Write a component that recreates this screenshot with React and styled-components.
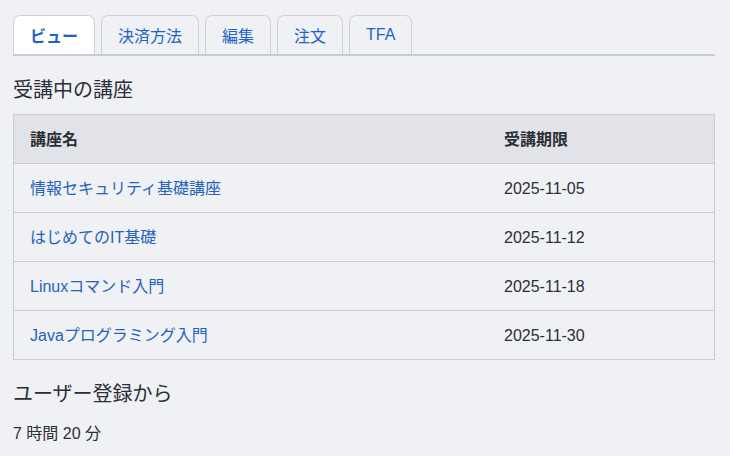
import styled, { createGlobalStyle } from "styled-components"

const GlobalStyle = createGlobalStyle`
  body {
    margin: 0;
    background: #f0f1f5;
    font-family: "Liberation Sans", "Noto Sans CJK JP", sans-serif;
    color: #2b2f36;
  }
`

const Page = styled.div`
  padding: 15px 15px 20px 13px;
`

const TabBar = styled.div`
  display: flex;
  gap: 6px;
  border-bottom: 2px solid #c9cbd3;
`

const Tab = styled.div`
  height: 38px;
  padding: 0 16px;
  display: flex;
  align-items: center;
  border: 1px solid #cfd1d8;
  border-bottom: none;
  border-radius: 7px 7px 0 0;
  background: ${(p) => (p.active ? "#ffffff" : "#f0f1f5")};
  color: #1f63c4;
  font-size: 16px;
  font-weight: ${(p) => (p.active ? 700 : 400)};
  cursor: pointer;
`

const Title = styled.h2`
  margin: ${(p) => p.margin || "20px 0 10px"};
  font-size: 20px;
  line-height: 28px;
  font-weight: 400;
`

const Table = styled.table`
  width: 100%;
  border-collapse: collapse;
  border: 1px solid #c9ccd3;
  font-size: 16px;
`

const Th = styled.th`
  padding: 16px 16px 14px;
  line-height: 18px;
  text-align: left;
  background: #e1e3e8;
  font-weight: 700;
  border-bottom: 1px solid #c9ccd3;
  width: ${(p) => p.width || "auto"};
`

const Td = styled.td`
  padding: 16px 16px 14px;
  line-height: 18px;
  border-bottom: 1px solid #c9ccd3;
`

const CourseLink = styled.a`
  color: #2563b8;
  text-decoration: none;
`

const Elapsed = styled.p`
  margin: 15px 0 0;
  font-size: 16px;
  line-height: 22px;
`

const courses = [
  { name: "情報セキュリティ基礎講座", until: "2025-11-05" },
  { name: "はじめてのIT基礎", until: "2025-11-12" },
  { name: "Linuxコマンド入門", until: "2025-11-18" },
  { name: "Javaプログラミング入門", until: "2025-11-30" },
]

const tabs = ["ビュー", "決済方法", "編集", "注文", "TFA"]

export default function App() {
  return (
    <>
      <GlobalStyle />
      <Page>
        <TabBar>
          {tabs.map((t, i) => (
            <Tab key={t} active={i === 0}>
              {t}
            </Tab>
          ))}
        </TabBar>

        <Title>受講中の講座</Title>
        <Table>
          <thead>
            <tr>
              <Th width="442px">講座名</Th>
              <Th>受講期限</Th>
            </tr>
          </thead>
          <tbody>
            {courses.map((c) => (
              <tr key={c.name}>
                <Td>
                  <CourseLink href="#">{c.name}</CourseLink>
                </Td>
                <Td>{c.until}</Td>
              </tr>
            ))}
          </tbody>
        </Table>

        <Title margin="20px 0 0">ユーザー登録から</Title>
        <Elapsed>7 時間 20 分</Elapsed>
      </Page>
    </>
  )
}
